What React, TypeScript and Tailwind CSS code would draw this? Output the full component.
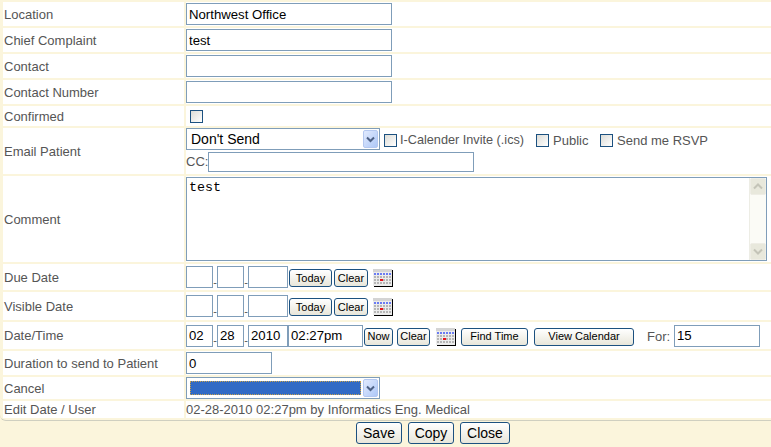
const font = "font-['Liberation_Sans',Arial,sans-serif]";

const Box = ({ w, value = "" }: { w: string; value?: string }) => (
  <input
    readOnly
    value={value}
    className={`${w} h-[22px] shrink-0 border border-[#7f9db9] bg-white px-[2px] text-[13.2px] text-black outline-none`}
  />
);

const Check = () => (
  <input
    type="checkbox"
    className="h-[13px] w-[13px] shrink-0 appearance-none border border-[#1c5180] bg-gradient-to-br from-[#dcdcd7] to-white"
  />
);

const Btn = ({ w, label, big }: { w: string; label: string; big?: boolean }) => (
  <button
    className={`${w} ${
      big ? "h-[22px] text-[14px]" : "h-[18px] text-[11px]"
    } flex shrink-0 items-center justify-center rounded-[3px] border border-[#1c5180] bg-gradient-to-b from-white to-[#e8e6da] text-black`}
  >
    {label}
  </button>
);

const Chevron = () => (
  <div className="flex h-[18px] w-[15px] shrink-0 items-center justify-center rounded-[2px] border border-[#b4c8f0] bg-gradient-to-br from-[#e1eafe] to-[#aec8f7]">
    <svg width="9" height="7" viewBox="0 0 9 7">
      <path d="M1 1.5 L4.5 5 L8 1.5" fill="none" stroke="#4d6185" strokeWidth="2" />
    </svg>
  </div>
);

const Select = ({ children }: { children: React.ReactNode }) => (
  <div className="flex h-[22px] w-[194px] shrink-0 items-center border border-[#7f9db9] bg-white pl-[2px] pr-[1px]">
    <div className="min-w-0 flex-1">{children}</div>
    <div className="ml-[2px]">
      <Chevron />
    </div>
  </div>
);

const CalIcon = ({ className = "" }: { className?: string }) => (
  <svg width="20" height="18" viewBox="0 0 20 18" className={`shrink-0 ${className}`} shapeRendering="crispEdges">
    <rect x="0" y="0" width="19" height="17" fill="#ececec" />
    <rect x="0" y="0" width="19" height="3" fill="#d4d4d4" />
    <path d="M1 5 H19" stroke="#6a7cf2" strokeWidth="2" strokeDasharray="2 1" />
    <path d="M1 8 H19 M1 11 H19 M1 14 H19" stroke="#b6b6b6" strokeWidth="2" strokeDasharray="2 1" />
    <rect x="7" y="10" width="3" height="2" fill="#e8141c" />
    <path d="M19.5 1 V17.5 H1" fill="none" stroke="#000" />
  </svg>
);

const Dash = () => <span className="mt-[10px] w-[4px] shrink-0 text-center text-[11px] leading-[11px]">-</span>;

const Row = ({ label, h, children, className = "", top = "pt-px" }: { label: string; h: string; children?: React.ReactNode; className?: string; top?: string }) => (
  <div className={`flex ${h} gap-[2px]`}>
    <div className={`flex w-[181px] shrink-0 items-center bg-white pl-px ${top}`}>{label}</div>
    <div className={`flex min-w-0 flex-1 items-center bg-white ${className}`}>{children}</div>
  </div>
);

export default function App() {
  return (
    <div className={`h-[447px] w-[771px] overflow-hidden bg-[#fbf5dc] text-[13px] text-[#555] ${font}`}>
      <div className="flex h-[421px] flex-col gap-[2px] rounded-bl-[6px] border-b border-[#cfcfc0] pl-[3px] pt-[2px]">
        <Row label="Location" h="h-[24px]">
          <Box w="w-[206px]" value="Northwest Office" />
        </Row>
        <Row label="Chief Complaint" h="h-[24px]">
          <Box w="w-[206px]" value="test" />
        </Row>
        <Row label="Contact" h="h-[24px]">
          <Box w="w-[206px]" />
        </Row>
        <Row label="Contact Number" h="h-[24px]">
          <Box w="w-[206px]" />
        </Row>
        <Row label="Confirmed" h="h-[20px]" className="pl-[4px]">
          <Check />
        </Row>
        <Row label="Email Patient" h="h-[46px]" className="!block">
          <div className="flex h-[22px] items-start">
            <Select>
              <span className="pl-[2px] text-[14px] text-black">Don't Send</span>
            </Select>
            <div className="ml-[4px] mt-[2px] flex items-center">
              <Check />
              <span className="ml-[3px] w-[124px] whitespace-nowrap pt-px text-[12.7px]">I-Calender Invite (.ics)</span>
            </div>
            <div className="ml-[12px] mt-[2px] flex items-center">
              <Check />
              <span className="ml-[4px] w-[35px] pt-px">Public</span>
            </div>
            <div className="ml-[12px] mt-[2px] flex items-center">
              <Check />
              <span className="ml-[4px] pt-px">Send me RSVP</span>
            </div>
          </div>
          <div className="mt-[2px] flex items-center">
            <span className="w-[22px]">CC:</span>
            <input readOnly className="h-[20px] w-[266px] border border-[#7f9db9] bg-white outline-none" />
          </div>
        </Row>
        <Row label="Comment" h="h-[86px]">
          <div className="relative h-[84px] w-[581px] shrink-0 border border-[#7f9db9] bg-white px-[2px] pt-[2px]">
            <textarea
              readOnly
              value="test"
              className="block h-full w-full resize-none overflow-hidden font-['Liberation_Mono',monospace] text-[13.33px] leading-[15px] text-black outline-none"
            />
            <div className="absolute bottom-0 right-0 top-0 flex w-[17px] flex-col justify-between border-l border-[#ededE5] bg-[#fbfbf6]">
              <div className="flex h-[17px] items-center justify-center rounded-[2px] border border-[#eeede5] bg-[#e8e8dc]">
                <svg width="10" height="7" viewBox="0 0 10 7">
                  <path d="M1 5.5 L5 1.5 L9 5.5" fill="none" stroke="#c4c4b8" strokeWidth="2" />
                </svg>
              </div>
              <div className="flex h-[17px] items-center justify-center rounded-[2px] border border-[#eeede5] bg-[#e8e8dc]">
                <svg width="10" height="7" viewBox="0 0 10 7">
                  <path d="M1 1.5 L5 5.5 L9 1.5" fill="none" stroke="#c4c4b8" strokeWidth="2" />
                </svg>
              </div>
            </div>
          </div>
        </Row>
        <Row label="Due Date" h="h-[26px]">
          <Box w="w-[27px]" />
          <Dash />
          <Box w="w-[27px]" />
          <Dash />
          <Box w="w-[40px]" />
          <div className="ml-px mt-[2px] flex items-center gap-[2px]">
            <Btn w="w-[43px]" label="Today" />
            <Btn w="w-[34px]" label="Clear" />
          </div>
          <CalIcon className="ml-[5px] mt-[2px]" />
        </Row>
        <Row label="Visible Date" h="h-[28px]">
          <Box w="w-[27px]" />
          <Dash />
          <Box w="w-[27px]" />
          <Dash />
          <Box w="w-[40px]" />
          <div className="ml-px mt-[2px] flex items-center gap-[2px]">
            <Btn w="w-[43px]" label="Today" />
            <Btn w="w-[34px]" label="Clear" />
          </div>
          <CalIcon className="ml-[5px] mt-[2px]" />
        </Row>
        <Row label="Date/Time" h="h-[27px]">
          <Box w="w-[27px]" value="02" />
          <Dash />
          <Box w="w-[27px]" value="28" />
          <Dash />
          <Box w="w-[40px]" value="2010" />
          <Box w="w-[75px]" value="02:27pm" />
          <div className="ml-px mt-[2px] flex items-center gap-[4px]">
            <Btn w="w-[29px]" label="Now" />
            <Btn w="w-[33px]" label="Clear" />
          </div>
          <CalIcon className="ml-[6px] mt-[2px]" />
          <div className="ml-[5px] mt-[2px] flex items-center gap-[6px]">
            <Btn w="w-[67px]" label="Find Time" />
            <Btn w="w-[100px]" label="View Calendar" />
          </div>
          <span className="ml-[13px] mt-[2px] w-[27px]">For:</span>
          <Box w="w-[86px]" value="15" />
        </Row>
        <Row label="Duration to send to Patient" h="h-[24px]">
          <Box w="w-[86px]" value="0" />
        </Row>
        <Row label="Cancel" h="h-[22px]">
          <Select>
            <div className="ml-px h-[14px] w-[171px] border border-dotted border-[#c9a24a] bg-[#316ac5]" />
          </Select>
        </Row>
        <Row label="Edit Date / User" h="h-[17px]" top="pt-0">
          02-28-2010 02:27pm by Informatics Eng. Medical
        </Row>
      </div>
      <div className="flex justify-end gap-[6px] pr-[261px] pt-px">
        <Btn w="w-[46px]" label="Save" big />
        <Btn w="w-[46px]" label="Copy" big />
        <Btn w="w-[50px]" label="Close" big />
      </div>
    </div>
  );
}
